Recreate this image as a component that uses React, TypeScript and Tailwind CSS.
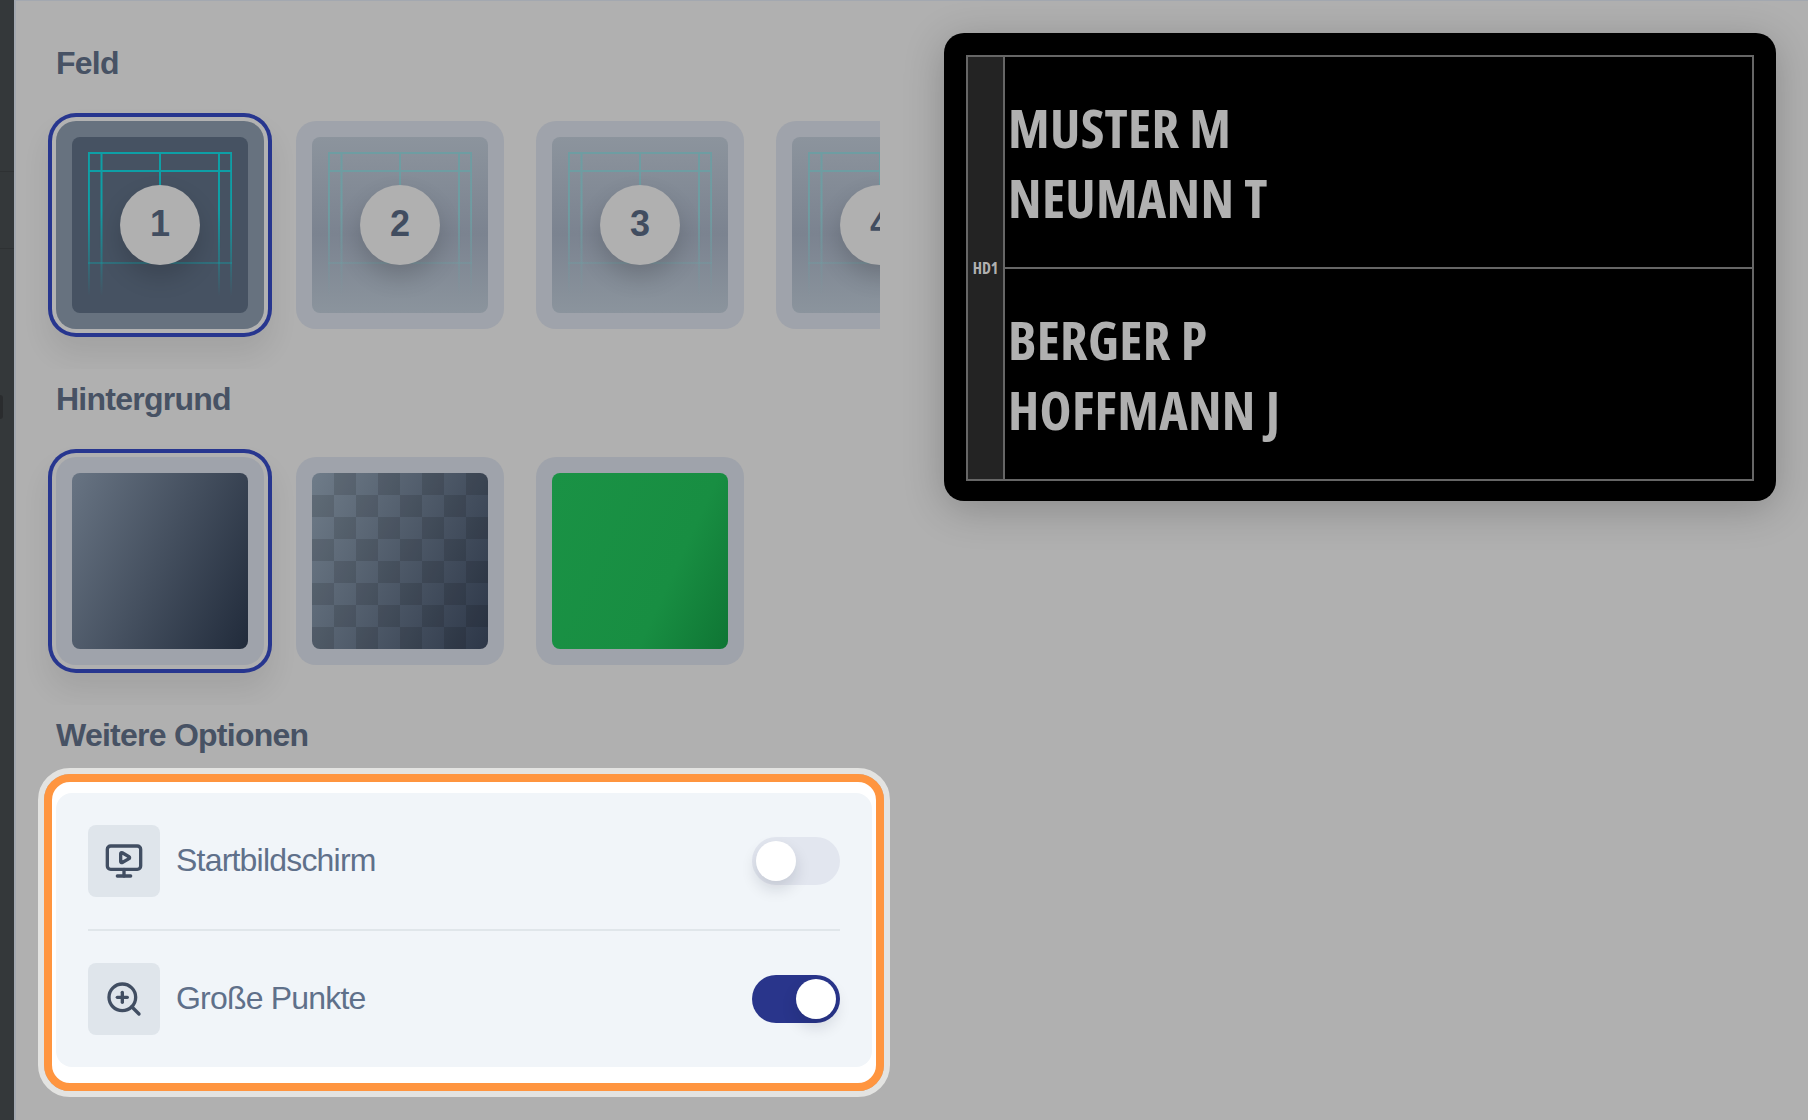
import { Fragment } from "react";
import { MonitorPlay, ZoomIn } from "lucide-react";

const sans = "font-['Liberation_Sans',Arial,sans-serif]";

function Heading({ children }: { children: string }) {
  return <h2 className={`${sans} text-[32px] leading-[36px] font-bold text-[#475264] tracking-[-0.75px]`}>{children}</h2>;
}

function Court({ selected }: { selected: boolean }) {
  const id = selected ? "court-on" : "court-off";
  const color = selected ? "#0e9fa6" : "#6e9da2";
  const lines = [
    "M0.9 0V144",
    "M143.2 0V144",
    "M13.5 0V144",
    "M131 0V144",
    "M72 0V40",
    "M0 1H144",
    "M0 19H144",
    "M0 111H144",
  ];
  return (
    <svg className="absolute left-4 top-[15px]" width="144" height="144" viewBox="0 0 144 144" fill="none">
      <defs>
        <linearGradient id={id} gradientUnits="userSpaceOnUse" x1="0" y1="0" x2="0" y2="144">
          <stop offset="0" stopColor={color} />
          <stop offset="0.4" stopColor={color} />
          <stop offset="1" stopColor={color} stopOpacity="0" />
        </linearGradient>
      </defs>
      {lines.map((d) => (
        <path key={d} d={d} stroke={`url(#${id})`} strokeWidth="2" />
      ))}
    </svg>
  );
}

function FieldTile({ n, selected }: { n: number; selected: boolean }) {
  return (
    <div
      className={`flex-none size-[208px] rounded-[20px] p-4 ${
        selected
          ? "bg-[#67727f] shadow-[0_0_0_4px_#b2b2b2,0_0_0_8px_#27368f,0_18px_28px_8px_rgba(0,0,0,0.08)]"
          : "bg-[#9fa3ab]"
      }`}
    >
      <div
        className={`relative size-44 overflow-hidden rounded-lg ${
          selected ? "bg-[#465262]" : "bg-[linear-gradient(180deg,#8c949d,#7b8390_55%,#8b949d)]"
        }`}
      >
        <Court selected={selected} />
        <div className="absolute left-12 top-12 flex size-20 items-center justify-center rounded-full bg-[#b0b0b0] pb-[3px] shadow-[0_12px_24px_rgba(0,0,0,0.16)]">
          <span className={`${sans} text-[36px] leading-none font-bold text-[#414d60]`}>{n}</span>
        </div>
      </div>
    </div>
  );
}

function BackgroundTile({ children, selected }: { children: React.ReactNode; selected?: boolean }) {
  return (
    <div
      className={`flex-none size-[208px] rounded-[20px] bg-[#9fa3ab] p-4 ${
        selected ? "shadow-[0_0_0_4px_#b0b0b0,0_0_0_8px_#27368f,0_18px_28px_8px_rgba(0,0,0,0.08)]" : ""
      }`}
    >
      {children}
    </div>
  );
}

function Toggle({ on }: { on: boolean }) {
  return (
    <div className={`flex h-12 w-[88px] flex-none rounded-full p-1 ${on ? "justify-end bg-[#29358b]" : "justify-start bg-[#e2e6ef]"}`}>
      <div className="size-10 rounded-full bg-white shadow-[0_8px_16px_rgba(15,23,42,0.14)]" />
    </div>
  );
}

function OptionRow({ label, icon, on }: { label: string; icon: React.ReactNode; on: boolean }) {
  return (
    <div className="flex items-center">
      <div className="flex size-[72px] flex-none items-center justify-center rounded-lg bg-[#dfe5eb] text-[#414e62]">{icon}</div>
      <span className={`${sans} ml-4 flex-1 pb-[3px] text-[32px] leading-9 tracking-[-0.8px] text-[#5f708a]`}>{label}</span>
      <Toggle on={on} />
    </div>
  );
}

const players = [
  ["MUSTER M", "NEUMANN T"],
  ["BERGER P", "HOFFMANN J"],
];

function Preview() {
  return (
    <div className="mt-[32px] ml-[64px] h-[468px] w-[832px] flex-none rounded-[20px] bg-black p-[22px] shadow-[0_8px_40px_rgba(0,0,0,0.22)]">
      <div className="flex h-[426px] border-2 border-[#666666]">
        <div className="flex w-[37px] flex-none items-center justify-center border-r-2 border-[#666666] bg-[#232323]">
          <span className="font-['Open_Sans',sans-serif] text-[16px] leading-none font-bold [font-stretch:75%] text-[#b0b0b0]">HD1</span>
        </div>
        <div className="flex flex-1 flex-col">
          {players.map((team, i) => (
            <Fragment key={team[0]}>
              {i > 0 ? <div className="h-0.5 bg-[#666666]" /> : null}
              <div className="flex flex-1 flex-col justify-center pl-[3px]">
                {team.map((name) => (
                  <div key={name} className="font-['Open_Sans',sans-serif] text-[54px] leading-[70px] font-bold tracking-[0.3px] [font-stretch:75%] text-[#b0b0b0]">
                    {name}
                  </div>
                ))}
              </div>
            </Fragment>
          ))}
        </div>
      </div>
    </div>
  );
}

export default function App() {
  return (
    <div className="flex h-[1120px] w-[1808px] overflow-hidden bg-[#b0b0b0]">
      <div className="w-[14px] flex-none bg-[#34383a] pt-[171px]">
        <div className="h-px bg-[#2e3133]" />
        <div className="mt-[76px] h-px bg-[#2e3133]" />
        <div className="mt-[146px] h-[24px] w-[3px] rounded-r-full bg-[#2a2c2e]" />
      </div>
      <div className="flex flex-1 border-t border-l-2 border-[#a3a8b0]">
        <div className="ml-[40px] w-[824px] flex-none pt-[44px]">
          <Heading>Feld</Heading>
          <div className="mt-[24px] -mb-10 -ml-10 flex w-[864px] gap-8 overflow-hidden pt-4 pb-10 pl-10">
            {[1, 2, 3, 4].map((n) => (
              <FieldTile key={n} n={n} selected={n === 1} />
            ))}
          </div>
          <div className="mt-[52px]">
            <Heading>Hintergrund</Heading>
          </div>
          <div className="mt-[24px] -mb-10 -ml-10 flex w-[864px] gap-8 overflow-hidden pt-4 pb-10 pl-10">
            <BackgroundTile selected>
              <div className="size-44 rounded-lg bg-[linear-gradient(115deg,#687483,#212b3b)]" />
            </BackgroundTile>
            <BackgroundTile>
              <div className="size-44 rounded-lg [background:repeating-conic-gradient(#0000001f_0_25%,#0000_0_50%)_0_0/44px_44px,linear-gradient(115deg,#6f7c89,#2d3748)]" />
            </BackgroundTile>
            <BackgroundTile>
              <div className="size-44 rounded-lg bg-[linear-gradient(115deg,#1a9245,#188e42_65%,#0f7534)]" />
            </BackgroundTile>
          </div>
          <div className="mt-[52px]">
            <Heading>Weitere Optionen</Heading>
          </div>
          {/* highlight frame around the options card */}
          <div className="mt-[15px] -ml-[18px] w-[852px] rounded-[32px] border-[6px] border-[#e3e3e1]">
            <div className="rounded-[26px] border-8 border-[#ff953f] bg-white px-1 pt-[11px] pb-[16px]">
              <div className="rounded-2xl bg-[#f1f5f9] p-8">
                <OptionRow label="Startbildschirm" on={false} icon={<MonitorPlay size={40} strokeWidth={2} />} />
                <div className="my-8 h-0.5 bg-[#e0e6ea]" />
                <OptionRow label="Große Punkte" on icon={<ZoomIn size={40} strokeWidth={2} />} />
              </div>
            </div>
          </div>
        </div>
        <Preview />
      </div>
    </div>
  );
}
